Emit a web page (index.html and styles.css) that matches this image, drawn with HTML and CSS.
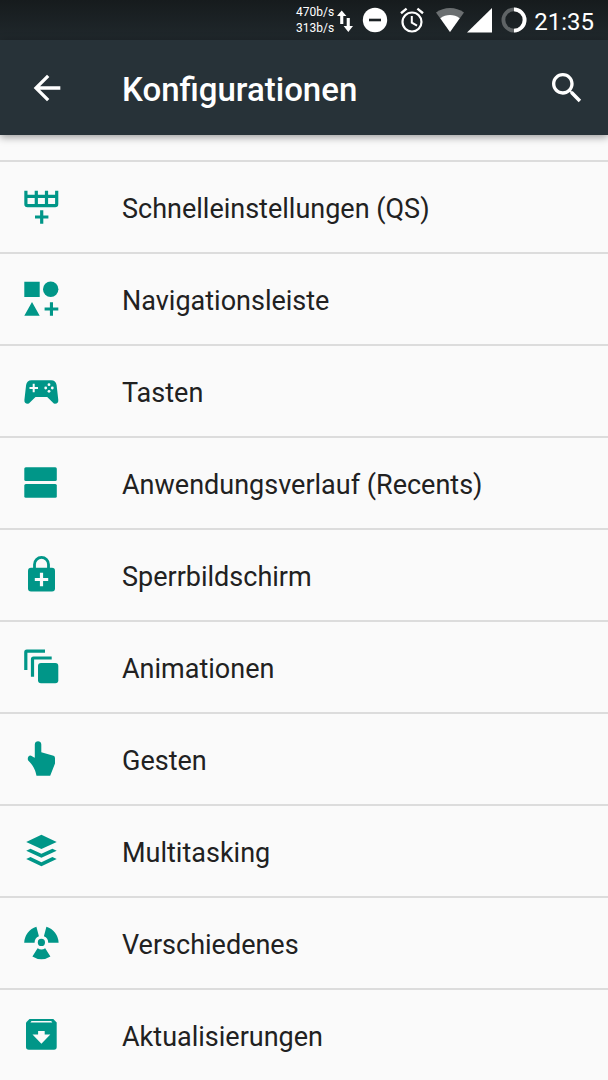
FILE: index.html
```html
<!DOCTYPE html>
<html lang="de">
<head>
<meta charset="utf-8">
<meta name="viewport" content="width=device-width, initial-scale=1">
<title>Konfigurationen</title>
<link rel="stylesheet" href="styles.css">
</head>
<body>
<div class="status-bar">
  <div class="net-speed"><span>470b/s</span><span>313b/s</span></div>
  <svg class="st-traffic" width="16" height="26" viewBox="0 0 16 26" fill="#fff"><path d="M4.700 3.500 9.400 9H6.300V17H3.200V9H0ZM11.300 25 6.600 19H9.700V11H12.800V19H16Z"/></svg>
  <svg class="st-dnd" width="26" height="26" viewBox="0 0 26 26"><circle cx="13" cy="13" r="12.200" fill="#fff"/><path d="M7 13H19" stroke="#1b2124" stroke-width="2.600"/></svg>
  <svg class="st-alarm" width="24" height="26" viewBox="0 0 24 26" fill="none" stroke="#fff"><circle cx="12" cy="15" r="9.500" stroke-width="2.200"/><path d="M11.800 9V15.600L17 18.600" stroke-width="2"/><path d="M1 6.200 6.600 1.600M17.400 1.600 23 6.200" stroke-width="2.400"/></svg>
  <svg class="st-wifi" width="28" height="26" viewBox="0 0 28 26"><path d="M0 5.500C8 -.6 20 -.6 28 5.500L14 25Z" fill="#6b6f71"/><path d="M4.300 11.200C10 6.900 18 6.900 23.700 11.200L14 25Z" fill="#fff"/></svg>
  <svg class="st-signal" width="25" height="26" viewBox="0 0 25 26"><path d="M25 1V25.500H0Z" fill="#fff"/></svg>
  <svg class="st-battery" width="26" height="26" viewBox="0 0 26 26" fill="none" stroke-width="3.800"><circle cx="13" cy="13" r="10.600" stroke="#5f6466"/><path d="M13 2.400A10.600 10.600 0 0 1 13 23.600" stroke="#fff"/></svg>
  <time class="clock">21:35</time>
</div>
<header class="app-bar">
  <button class="icon-button" aria-label="Zurück"><svg width="40" height="40" viewBox="0 0 24 24" fill="#fff"><path d="M20 11H7.830l5.590-5.590L12 4l-8 8 8 8 1.410-1.410L7.830 13H20v-2z"/></svg></button>
  <h1 class="title">Konfigurationen</h1>
  <button class="icon-button" aria-label="Suchen"><svg width="40" height="40" viewBox="0 0 24 24" fill="#fff"><path d="M15.500 14h-.79l-.28-.27C15.410 12.590 16 11.110 16 9.500 16 5.910 13.090 3 9.500 3S3 5.910 3 9.500 5.910 16 9.500 16c1.610 0 3.090-.59 4.230-1.570l.27.28v.79l5 4.990L20.490 19l-4.990-5zm-6 0C7.010 14 5 11.990 5 9.500S7.010 5 9.500 5 14 7.010 14 9.500 11.990 14 9.500 14z"/></svg></button>
</header>
<main class="list-wrap">
<ul class="list">
  <li><a class="row" href="#qs"><svg class="row-icon" viewBox="0 0 40 40" fill="none" stroke="currentColor" stroke-width="3.200"><path d="M4.900 3.700V17Q4.900 18.600 6.500 18.600H34.100Q35.700 18.600 35.700 17V3.700M4.700 9.400H35.900M15.300 3.700V18.600M25.500 3.700V18.600M14 30H27.400M20.700 23.300V36.700"/></svg><span>Schnelleinstellungen (QS)</span></a></li>
  <li><a class="row" href="#nav"><svg class="row-icon" viewBox="0 0 40 40" fill="currentColor"><path d="M3.300 2.700H18.700V18H3.300ZM11 23 18.700 36.700H3.300ZM28.900 23.300h3.100v5.200h5.300v3.100h-5.300v5.200H28.900v-5.200h-5.300v-3.100H28.900Z"/><circle cx="29.700" cy="10.300" r="7.700"/></svg><span>Navigationsleiste</span></a></li>
  <li><a class="row" href="#tasten"><svg class="row-icon" viewBox="0 0 40 40"><path fill="currentColor" d="M10.500 9.300H30.200Q34.800 9.300 35.600 14L37.300 29Q37.500 32.800 34 32.800 32.800 32.800 31.800 31.600L26.200 26H14.500L8.900 31.600Q8 32.800 6.700 32.800 3.200 32.800 3.400 29L5.100 14Q5.900 9.300 10.500 9.300Z"/><path d="M8.500 17H17M12.700 12.800V21.200" stroke="#fafafa" stroke-width="2"/><g fill="#fafafa"><circle cx="28" cy="13.700" r="1.400"/><circle cx="28" cy="20.300" r="1.400"/><circle cx="24.700" cy="17" r="1.400"/><circle cx="31.300" cy="17" r="1.400"/></g></svg><span>Tasten</span></a></li>
  <li><a class="row" href="#recents"><svg class="row-icon" viewBox="0 0 40 40" fill="currentColor"><rect x="3.300" y="4.300" width="32.500" height="13.800" rx="1.500"/><rect x="3.300" y="21" width="32.500" height="13.800" rx="1.500"/></svg><span>Anwendungsverlauf (Recents)</span></a></li>
  <li><a class="row" href="#sperre"><svg class="row-icon" viewBox="0 0 40 40"><rect x="7" y="12.700" width="27" height="23.700" rx="3" fill="currentColor"/><path d="M13.500 14V9.400A7 7 0 0 1 27.500 9.400V14" fill="none" stroke="currentColor" stroke-width="2.800"/><path d="M13.800 24.500H27.200M20.500 17.800V31.200" stroke="#fafafa" stroke-width="3.200"/></svg><span>Sperrbildschirm</span></a></li>
  <li><a class="row" href="#animationen"><svg class="row-icon" viewBox="0 0 40 40"><path d="M4.800 23V5.200Q4.800 4.200 5.800 4.200H24M11.500 29.700V12Q11.500 11 12.500 11H30.700" fill="none" stroke="currentColor" stroke-width="3.200"/><rect x="17" y="16" width="20.300" height="20.300" rx="3" fill="currentColor"/></svg><span>Animationen</span></a></li>
  <li><a class="row" href="#gesten"><svg class="row-icon" viewBox="0 0 40 40" fill="currentColor"><path d="M13.800 5.500C13.800 1.300 20.300 1.300 20.300 5.500V13.200L32.500 16.800Q34 17.300 34 19V24.500L29.200 36.700H15.500C14.500 31.500 12.800 27.200 7.200 21.500 6.300 20 6.800 17 9 16.500 10.500 16.500 12.500 18.200 13.800 18.800Z"/></svg><span>Gesten</span></a></li>
  <li><a class="row" href="#multitasking"><svg class="row-icon" viewBox="0 0 40 40" fill="currentColor"><path d="M20.400 3.700 35.700 10.900 20.400 18 5.200 10.900ZM5.200 19.700 9.500 17.700 20.400 22.700 31.400 17.700 35.700 19.700 20.400 26.700ZM5.200 28 9.500 26 20.400 31.200 31.400 26 35.700 28 20.400 35.200Z"/></svg><span>Multitasking</span></a></li>
  <li><a class="row" href="#verschiedenes"><svg class="row-icon" viewBox="0 0 40 40" fill="currentColor"><circle cx="20.400" cy="19.400" r="3.600"/><path d="M3.200 19.700A17.300 17.300 0 0 1 15.400 3.700L17.900 13.300A6.800 6.800 0 0 0 13.600 19.700ZM37.600 19.700A17.300 17.300 0 0 0 25.400 3.700L22.900 13.300A6.800 6.800 0 0 1 27.200 19.700ZM16.600 25.300A7.200 7.200 0 0 0 24.200 25.300L29.400 33.500A16.800 16.800 0 0 1 11.400 33.500Z"/></svg><span>Verschiedenes</span></a></li>
  <li><a class="row" href="#aktualisierungen"><svg class="row-icon" viewBox="0 0 40 40"><path fill="currentColor" d="M8.500 4H32.300L35.700 7.500V32Q35.700 34.800 33 34.800H7.800Q5 34.800 5 32V7.500Z"/><path fill="#fafafa" d="M10.500 5.900H30.200L31.300 7.400H9.400ZM17.100 16H23.700V19.600H29.300L20.400 28.700 11.500 19.600H17.100Z"/></svg><span>Aktualisierungen</span></a></li>
</ul>
</main>
</body>
</html>
```
FILE: styles.css
```css
* { box-sizing: border-box; }

body {
  margin: 0;
  background: #fafafa;
  color: #212121;
  font-family: Roboto, sans-serif;
}

.status-bar {
  display: flex;
  align-items: center;
  justify-content: flex-end;
  height: 40px;
  padding-right: 14px;
  background: linear-gradient(#161b1d, #20282c);
  color: #fff;
}

.net-speed {
  display: flex;
  flex-direction: column;
  font-size: 12px;
  line-height: 16px;
}

.st-traffic { margin-left: 3px; }
.st-dnd { margin-left: 9px; }
.st-alarm { margin-left: 12px; }
.st-wifi { margin-left: 12px; }
.st-signal { margin-left: 3px; }
.st-battery { margin-left: 9px; }

.clock {
  margin-left: 7px;
  padding-top: 4px;
  font-size: 24px;
  line-height: 28px;
}

.app-bar {
  position: relative;
  display: flex;
  align-items: center;
  height: 95px;
  padding: 0 21px 0 27px;
  background: #273238;
  box-shadow: 0 2px 8px rgba(0, 0, 0, 0.4);
  color: #fff;
}

.icon-button {
  display: flex;
  padding: 0;
  border: 0;
  background: none;
}

.title {
  flex: 1;
  margin: 0;
  padding: 4px 0 0 55px;
  font-size: 33px;
  font-weight: 500;
  line-height: 40px;
}

.list-wrap { padding-top: 25px; }

.list {
  margin: 0;
  padding: 0;
  list-style: none;
}

.row {
  display: flex;
  align-items: center;
  gap: 61px;
  height: 92px;
  padding: 0 21px;
  border-top: 2px solid #dcdcdc;
  color: inherit;
  font-size: 27px;
  line-height: 32px;
  text-decoration: none;
}

.row span { padding-top: 4px; }

.row-icon {
  flex: none;
  width: 40px;
  height: 40px;
  color: #009688;
}
```
